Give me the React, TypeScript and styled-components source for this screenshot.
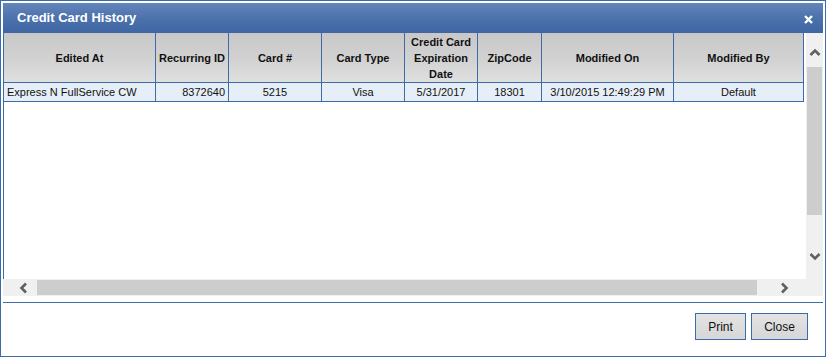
import styled, { createGlobalStyle } from "styled-components";

const GlobalStyle = createGlobalStyle`
  html, body {
    margin: 0;
    padding: 0;
    background: #ffffff;
  }
  * {
    box-sizing: border-box;
  }
`;

const BLUE = "#3d6aa8";

const Dialog = styled.div`
  width: 826px;
  height: 357px;
  border: 1px solid ${BLUE};
  padding: 2px;
  background: #ffffff;
  display: flex;
  flex-direction: column;
  font-family: "Liberation Sans", Arial, sans-serif;
  color: #000;
`;

const TitleBar = styled.div`
  height: 30px;
  flex: none;
  display: flex;
  align-items: center;
  justify-content: space-between;
  padding: 0 10px 0 14px;
  background: linear-gradient(to bottom, #6386ba 0%, #4c72ac 50%, #3e66a3 100%);
  color: #ffffff;
`;

const Title = styled.span`
  font-size: 13px;
  font-weight: bold;
  margin-top: -1px;
`;

const CloseX = styled.svg`
  display: block;
  margin-top: 2px;
`;

const ScrollArea = styled.div`
  height: 263px;
  flex: none;
  display: grid;
  grid-template-columns: 803px 17px;
  grid-template-rows: 246px 17px;
`;

const View = styled.div`
  border-left: 1px solid ${BLUE};
  overflow: hidden;
  background: #ffffff;
`;

const Row = styled.div<{ $head?: boolean }>`
  display: grid;
  grid-template-columns: 152px 73px 93px 83px 73px 64px 132px 130px;
  width: 800px;
  height: ${(p) => (p.$head ? "49px" : "20px")};
  background: ${(p) =>
    p.$head
      ? "linear-gradient(to bottom, #c8c8c8 0%, #d2d2d2 55%, #e0e0e0 100%)"
      : "#e6eef8"};
`;

const Cell = styled.div<{ $align?: "left" | "center" | "right"; $head?: boolean }>`
  border-right: 1px solid ${BLUE};
  border-bottom: 1px solid ${BLUE};
  display: flex;
  align-items: center;
  justify-content: ${(p) =>
    p.$align === "left" ? "flex-start" : p.$align === "right" ? "flex-end" : "center"};
  text-align: center;
  padding: 1px 3px 0 3px;
  font-size: 11px;
  font-weight: ${(p) => (p.$head ? "bold" : "normal")};
  line-height: ${(p) => (p.$head ? "16px" : "18px")};
  color: #111;
  white-space: ${(p) => (p.$head ? "normal" : "nowrap")};
`;

const Track = styled.div<{ $vertical?: boolean }>`
  background: #f0f0f0;
  display: flex;
  flex-direction: ${(p) => (p.$vertical ? "column" : "row")};
  padding: ${(p) => (p.$vertical ? "11px 0 14px 0" : "0 13px 0 12px")};
`;

const ArrowBtn = styled.div`
  flex: none;
  width: 17px;
  height: 17px;
  display: flex;
  align-items: center;
  justify-content: center;
`;

const Thumb = styled.div<{ $vertical?: boolean; $offset: number; $size: number }>`
  flex: none;
  background: #cdcdcd;
  ${(p) =>
    p.$vertical
      ? `margin: ${p.$offset}px 1px 0 1px; height: ${p.$size}px;`
      : `margin: 1px 0 1px ${p.$offset}px; width: ${p.$size}px;`}
`;

const Spacer = styled.div`
  flex: 1;
`;

const Corner = styled.div`
  background: #f0f0f0;
`;

const Footer = styled.div`
  margin-top: 6px;
  border-top: 1px solid ${BLUE};
  flex: 1;
  display: flex;
  justify-content: flex-end;
  align-items: flex-start;
  gap: 5px;
  padding: 10px 15px 0 0;
`;

const Button = styled.button<{ $w: number }>`
  width: ${(p) => p.$w}px;
  height: 27px;
  border: 1px solid ${BLUE};
  background: linear-gradient(to bottom, #e4e4e4 0%, #d6d6d6 100%);
  font-family: "Liberation Sans", Arial, sans-serif;
  font-size: 12px;
  color: #111;
  padding: 0;
  margin: 0;
  cursor: pointer;
`;

type Dir = "up" | "down" | "left" | "right";

const chevrons: Record<Dir, string> = {
  up: "M1.5 7 L6 2.5 L10.5 7",
  down: "M1.5 2 L6 6.5 L10.5 2",
  left: "M7 1.5 L2.5 6 L7 10.5",
  right: "M2 1.5 L6.5 6 L2 10.5",
};

function Chevron({ dir }: { dir: Dir }) {
  const horiz = dir === "left" || dir === "right";
  return (
    <svg width={horiz ? 9 : 12} height={horiz ? 12 : 9} viewBox={horiz ? "0 0 9 12" : "0 0 12 9"}>
      <path d={chevrons[dir]} fill="none" stroke="#606060" strokeWidth="2.6" />
    </svg>
  );
}

const columns = [
  { title: "Edited At", value: "Express N FullService CW", align: "left" as const },
  { title: "Recurring ID", value: "8372640", align: "right" as const },
  { title: "Card #", value: "5215", align: "center" as const },
  { title: "Card Type", value: "Visa", align: "center" as const },
  { title: "Credit Card Expiration Date", value: "5/31/2017", align: "center" as const },
  { title: "ZipCode", value: "18301", align: "center" as const },
  { title: "Modified On", value: "3/10/2015 12:49:29 PM", align: "center" as const },
  { title: "Modified By", value: "Default", align: "center" as const },
];

export default function App() {
  return (
    <>
      <GlobalStyle />
      <Dialog>
        <TitleBar>
          <Title>Credit Card History</Title>
          <CloseX width="9" height="9" viewBox="0 0 9 9">
            <path d="M1 1 L8 8 M8 1 L1 8" stroke="#ffffff" strokeWidth="2.4" />
          </CloseX>
        </TitleBar>
        <ScrollArea>
          <View>
            <Row $head>
              {columns.map((c) => (
                <Cell key={c.title} $head>
                  {c.title}
                </Cell>
              ))}
            </Row>
            <Row>
              {columns.map((c) => (
                <Cell key={c.title} $align={c.align}>
                  {c.value}
                </Cell>
              ))}
            </Row>
          </View>
          <Track $vertical>
            <ArrowBtn>
              <Chevron dir="up" />
            </ArrowBtn>
            <Thumb $vertical $offset={6} $size={148} />
            <Spacer />
            <ArrowBtn>
              <Chevron dir="down" />
            </ArrowBtn>
          </Track>
          <Track>
            <ArrowBtn>
              <Chevron dir="left" />
            </ArrowBtn>
            <Thumb $offset={5} $size={720} />
            <Spacer />
            <ArrowBtn>
              <Chevron dir="right" />
            </ArrowBtn>
          </Track>
          <Corner />
        </ScrollArea>
        <Footer>
          <Button $w={51}>Print</Button>
          <Button $w={57}>Close</Button>
        </Footer>
      </Dialog>
    </>
  );
}
